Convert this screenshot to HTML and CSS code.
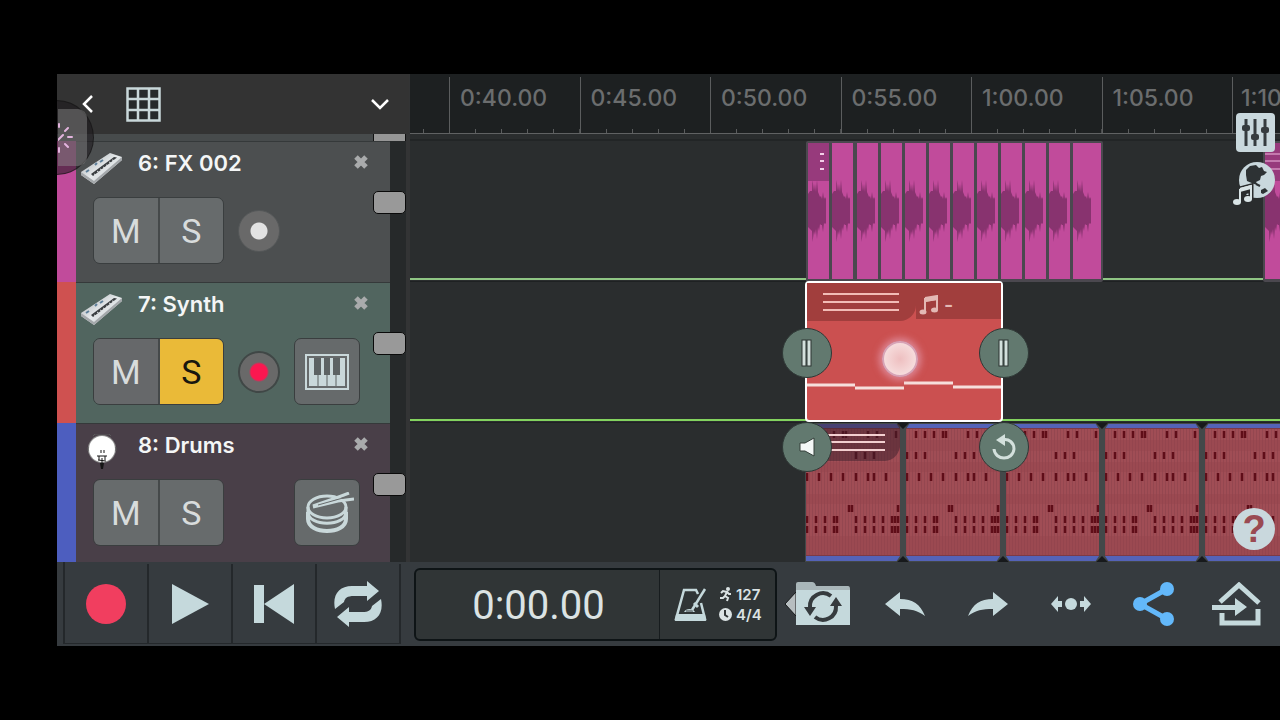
FILE: index.html
```html
<!DOCTYPE html>
<html lang="en">
<head>
    <meta charset="UTF-8">
    <meta name="viewport" content="width=device-width, initial-scale=1.0">
    <title>Song Editor</title>
    <link rel="stylesheet" href="styles.css">
</head>
<body>
    <!-- shared shapes -->
    <svg class="defs" width="0" height="0" aria-hidden="true">
        <defs>
            <linearGradient id="metal" x1="0" y1="0" x2="1" y2="1">
                <stop offset="0" stop-color="#9fa4a8"/>
                <stop offset="0.5" stop-color="#e6eaec"/>
                <stop offset="1" stop-color="#b9bdc0"/>
            </linearGradient>
            <symbol id="keys" viewBox="0 0 42 34">
                <path d="M0 20 29 1 41 5V8L13 32 0 23Z" fill="url(#metal)"/>
                <path d="M0 20 13 29 41 5V8L13 32 0 23Z" fill="#a4a8ab"/>
                <path d="M10 22 33 5 38 6 14 26Z" fill="#dfe3e5"/>
                <path d="M10 22 33 5 36 5.500 12 24Z" fill="#3b3f42"/>
                <path d="M13 22 17 24M16 19 20 22M19 17 23 19M22 15 26 17M25 13 29 14M28 10 32 12M31 8 35 9" stroke="#dfe3e5" stroke-width="1"/>
                <path d="M5 20 8 18M14 13 16 11M19 10 22 8" stroke="#5d7f9a" stroke-width="2"/>
            </symbol>
            <symbol id="wave" viewBox="0 0 19 64">
                <path d="M0 15 2 12 4 12 4.500 1 6 12 7 5 8 13 9 1 10 13 12 18 13 17 14 20 15 13 16 20 17 18 18 20V44L17 45 16 44 15 53 14 46 13 46 12 45 11 52 10 48 9 60 8 50 7 56 6 52 4.500 63 4 52 2 50 0 48Z" fill="#88336f"/>
            </symbol>
            <symbol id="fxpart" viewBox="0 0 21 136">
                <rect width="21" height="136" fill="#c14b9b"/>
                <use href="#wave" x="0" y="36" width="19" height="64"/>
            </symbol>
            <pattern id="bars" width="3" height="126" patternUnits="userSpaceOnUse">
                <rect width="3" height="126" fill="#a04d55"/>
                <rect width="1" height="126" fill="#944750"/>
            </pattern>
            <symbol id="drumpart" viewBox="0 0 94 137">
                <rect width="94" height="137" fill="#5463b8"/>
                <rect y="4" width="94" height="128" fill="#7d3a45"/>
                <rect y="5" width="94" height="126" fill="url(#bars)"/>
                <path d="M0 16h94v11H0zM0 38h94v10H0zM0 70h94v10H0zM0 112h94v19H0z" fill="#93434c" opacity="0.4"/>
                <g stroke="#5f0d18" stroke-width="2.500" fill="none">
                    <path d="M10 7v7M19 7v7M28 7v7M37 7v7M40 7v7M62 7v7M71 7v7M90 7v7"/>
                    <path d="M1 28v7M10 28v7M19 28v7M50 28v7M59 28v7M68 28v7"/>
                    <path d="M1 49v8M13 49v8M25 49v8M37 49v8M50 49v8M62 49v8M68 49v8M80 49v8"/>
                    <path d="M43 81v7M46 81v7M92 81v7"/>
                    <path id="hat" d="M1 92v7M10 92v7M19 92v7M28 92v7M31 92v7M50 92v7M59 92v7M68 92v7M77 92v7M86 92v7M89 92v7M92 92v7"/>
                    <use href="#hat" y="10"/>
                </g>
            </symbol>
            <symbol id="drumgap" viewBox="0 0 14 139">
                <path d="M4 0h6v139H4z" fill="#434849"/>
                <path d="M0 0h14l-4 6H4zM0 139h14l-4-6H4z" fill="#434849"/>
                <path d="M1 0h12l-6 6zM1 139h12l-6-6z" fill="#17191b"/>
            </symbol>
            <symbol id="notes" viewBox="0 0 20 20">
                <path d="M6 3 18 1V15M6 3V17M6 6 18 4" fill="none" stroke="currentColor" stroke-width="2"/>
                <path d="M6 3 18 1V5L6 7Z" fill="currentColor"/>
                <ellipse cx="4" cy="17" rx="3.500" ry="2.500" fill="currentColor"/>
                <ellipse cx="15.500" cy="15" rx="3.500" ry="2.500" fill="currentColor"/>
            </symbol>
            <symbol id="cross" viewBox="0 0 16 16">
                <path d="M3 3 13 13M13 3 3 13" stroke="#a9abac" stroke-width="5"/>
            </symbol>
        </defs>
    </svg>

    <div class="app">
        <main class="editor">
            <section class="track-panel">
                <header class="panel-header">
                    <button class="icon-button back" aria-label="Back">
                        <svg width="12" height="18" viewBox="0 0 12 18"><path d="M11 1 3 9 11 17" fill="none" stroke="#fff" stroke-width="2.500"/></svg>
                    </button>
                    <button class="icon-button grid-button" aria-label="Grid">
                        <svg width="35" height="35" viewBox="0 0 35 35">
                            <rect x="1.500" y="1.500" width="32" height="32" fill="#262a2b" stroke="#c9d8da" stroke-width="2.500"/>
                            <path d="M12 1V34M23 1V34M1 12H34M1 23H34" stroke="#c9d8da" stroke-width="2.500"/>
                        </svg>
                    </button>
                    <button class="icon-button collapse" aria-label="Collapse">
                        <svg width="18" height="11" viewBox="0 0 18 11"><path d="M1 1 9 9 17 1" fill="none" stroke="#fff" stroke-width="2.500"/></svg>
                    </button>
                </header>
                <div class="track-edge"><span class="edge-knob"></span></div>

                <article class="track track-fx">
                    <div class="track-body">
                        <div class="track-title">
                            <svg class="instrument" width="42" height="34"><use href="#keys"/></svg>
                            <h2>6: FX 002</h2>
                            <button class="icon-button close" aria-label="Remove track 6"><svg width="16" height="16"><use href="#cross"/></svg></button>
                        </div>
                        <div class="controls">
                            <div class="mute-solo">
                                <button>M</button>
                                <button>S</button>
                            </div>
                            <button class="arm" aria-label="Arm track 6"></button>
                        </div>
                    </div>
                    <input class="fader" type="range" min="0" max="100" value="58" aria-label="Volume 6">
                </article>

                <article class="track track-synth">
                    <div class="track-body">
                        <div class="track-title">
                            <svg class="instrument" width="42" height="34"><use href="#keys"/></svg>
                            <h2>7: Synth</h2>
                            <button class="icon-button close" aria-label="Remove track 7"><svg width="16" height="16"><use href="#cross"/></svg></button>
                        </div>
                        <div class="controls">
                            <div class="mute-solo">
                                <button>M</button>
                                <button class="on">S</button>
                            </div>
                            <button class="arm armed" aria-label="Arm track 7"></button>
                            <button class="play-pad" aria-label="Piano">
                                <svg width="44" height="36" viewBox="0 0 44 36">
                                    <rect x="1" y="1" width="42" height="34" fill="none" stroke="#c9d8da" stroke-width="2"/>
                                    <rect x="4" y="4" width="36" height="28" fill="#c9d8da"/>
                                    <path d="M13 20V32M22 20V32M31 20V32" stroke="#5c6263" stroke-width="1"/>
                                    <path d="M9 4h7v17H9zM19 4h6v17h-6zM28 4h7v17h-7z" fill="#5c6263"/>
                                </svg>
                            </button>
                        </div>
                    </div>
                    <input class="fader" type="range" min="0" max="100" value="58" aria-label="Volume 7">
                </article>

                <article class="track track-drums">
                    <div class="track-body">
                        <div class="track-title">
                            <svg class="instrument" width="42" height="38" viewBox="0 2 42 38">
                                <circle cx="21" cy="17" r="14" fill="#8c8c8c"/>
                                <circle cx="21" cy="17" r="13" fill="#fff"/>
                                <path d="M12 4 14 2H28L30 4M7 15v4M35 15v4" fill="none" stroke="#5b5b5b" stroke-width="1"/>
                                <path d="M20 18v3M23 18v3M16 24h10M18 24v4M24 24v4M17 28 25 29M21 26v9" stroke="#151515" stroke-width="1"/>
                                <path d="M19 31h4l-1 6h-2z" fill="#151515"/>
                            </svg>
                            <h2>8: Drums</h2>
                            <button class="icon-button close" aria-label="Remove track 8"><svg width="16" height="16"><use href="#cross"/></svg></button>
                        </div>
                        <div class="controls">
                            <div class="mute-solo">
                                <button>M</button>
                                <button>S</button>
                            </div>
                            <button class="play-pad" aria-label="Drum pads">
                                <svg width="54" height="42" viewBox="-6 0 54 42" fill="none" stroke="#c9d8da">
                                    <ellipse cx="21" cy="15" rx="19" ry="11" stroke-width="3"/>
                                    <path d="M2 15V20C2 35 40 35 40 20V15" stroke-width="3"/>
                                    <path d="M2 20V27C2 43 40 43 40 27V20" stroke-width="4"/>
                                    <path d="M7 14 30 6 43 1" stroke-width="3"/>
                                    <path d="M7 15 32 9 48 7" stroke-width="3"/>
                                    <path d="M12 13 44 4" stroke="#666a6b" stroke-width="1"/>
                                </svg>
                            </button>
                        </div>
                    </div>
                    <input class="fader" type="range" min="0" max="100" value="58" aria-label="Volume 8">
                </article>

                <div class="assist">
                    <svg class="assist-pad" width="29" height="57" viewBox="0 0 29 57">
                        <path d="M0 31 5 26M7 22 10 19M10 28H14M7 35 10 38M1 18V15M1 39V43" stroke="#e3b4de" stroke-width="2" stroke-linecap="round"/>
                    </svg>
                </div>
            </section>

            <section class="timeline">
                <div class="ruler">
                    <span class="lead"></span>
                    <span>0:40.00</span>
                    <span>0:45.00</span>
                    <span>0:50.00</span>
                    <span>0:55.00</span>
                    <span>1:00.00</span>
                    <span>1:05.00</span>
                    <span>1:10</span>
                </div>
                <div class="ruler-edge"></div>

                <div class="lane lane-fx">
                    <svg class="clip clip-fx" width="297" height="141" viewBox="0 0 297 141">
                        <rect width="297" height="141" rx="2" fill="#4b484f"/>
                        <rect x="267" y="2" width="28" height="136" fill="#c14b9b"/>
                        <use href="#fxpart" x="2" y="2" width="21" height="136"/>
                        <use href="#fxpart" x="26" y="2" width="21" height="136"/>
                        <use href="#fxpart" x="51" y="2" width="21" height="136"/>
                        <use href="#fxpart" x="75" y="2" width="21" height="136"/>
                        <use href="#fxpart" x="99" y="2" width="21" height="136"/>
                        <use href="#fxpart" x="123" y="2" width="21" height="136"/>
                        <use href="#fxpart" x="147" y="2" width="21" height="136"/>
                        <use href="#fxpart" x="171" y="2" width="21" height="136"/>
                        <use href="#fxpart" x="195" y="2" width="21" height="136"/>
                        <use href="#fxpart" x="219" y="2" width="21" height="136"/>
                        <use href="#fxpart" x="243" y="2" width="21" height="136"/>
                        <use href="#fxpart" x="267" y="2" width="21" height="136"/>
                        <rect x="2" y="2" width="21" height="38" fill="#973a7c"/>
                        <path d="M14 13h4M14 20h4M14 28h4" stroke="#f3cfe8" stroke-width="2"/>
                    </svg>
                    <svg class="clip clip-fx-next" width="60" height="141" viewBox="0 0 60 141">
                        <rect width="60" height="141" rx="2" fill="#4b484f"/>
                        <rect x="2" y="2" width="58" height="136" fill="#c14b9b"/>
                        <use href="#wave" x="2" y="38" width="19" height="64"/>
                        <rect x="2" y="2" width="58" height="38" fill="#973a7c"/>
                        <path d="M2 13h58M2 20h58M2 28h58" stroke="#f0b8df" stroke-width="1"/>
                    </svg>
                </div>

                <div class="lane lane-synth">
                    <div class="clip clip-synth">
                        <div class="clip-head">
                            <span class="clip-name">
                                <svg width="76" height="18" viewBox="0 0 76 18"><path d="M0 1H76M0 9H76M0 17H76" stroke="#f2bcb6" stroke-width="2"/></svg>
                            </span>
                            <span class="clip-notes"><svg width="20" height="20"><use href="#notes"/></svg>-</span>
                        </div>
                        <svg class="melody" viewBox="0 0 194 10" preserveAspectRatio="none">
                            <path d="M0 4H48M48 7H97M97 2H146M146 6H194" stroke="#f6dfdc" stroke-width="3"/>
                        </svg>
                        <span class="touch"></span>
                        <button class="handle top left" aria-label="Trim start">
                            <svg width="14" height="28" viewBox="0 0 14 28" fill="#d3e0dc" stroke="#2d3432"><rect x="2" y="1" width="4" height="26"/><rect x="7" y="1" width="4" height="26"/></svg>
                        </button>
                        <button class="handle top right" aria-label="Trim end">
                            <svg width="14" height="28" viewBox="0 0 14 28" fill="#d3e0dc" stroke="#2d3432"><rect x="2" y="1" width="4" height="26"/><rect x="7" y="1" width="4" height="26"/></svg>
                        </button>
                        <button class="handle bottom left" aria-label="Mute clip">
                            <svg width="18" height="20" viewBox="0 0 18 20"><path d="M2 6H7L16 1V19L7 14H2Z" fill="#f4f8f7" stroke="#35403b"/></svg>
                        </button>
                        <button class="handle bottom right" aria-label="Loop clip">
                            <svg width="26" height="28" viewBox="0 0 26 28">
                                <path d="M11 7C18 5 23 10 23 16 22 28 4 28 3 16" fill="none" stroke="#d3e0dc" stroke-width="3"/>
                                <path d="M5 7 14 1 14 13Z" fill="#d3e0dc"/>
                            </svg>
                        </button>
                    </div>
                </div>

                <div class="lane lane-drums">
                    <svg class="clip clip-drums" width="500" height="139" viewBox="0 0 500 139">
                        <rect width="500" height="139" fill="#434849"/>
                        <use href="#drumpart" x="1" y="1" width="94" height="137"/>
                        <use href="#drumpart" x="101" y="1" width="94" height="137"/>
                        <use href="#drumpart" x="201" y="1" width="94" height="137"/>
                        <use href="#drumpart" x="300" y="1" width="94" height="137"/>
                        <use href="#drumpart" x="400" y="1" width="94" height="137"/>
                        <use href="#drumgap" x="91" y="0" width="14" height="139"/>
                        <use href="#drumgap" x="191" y="0" width="14" height="139"/>
                        <use href="#drumgap" x="290" y="0" width="14" height="139"/>
                        <use href="#drumgap" x="390" y="0" width="14" height="139"/>
                        <path d="M1 1H95V24Q92 37 80 38H1Z" fill="#3b1f2c" opacity="0.5"/>
                        <path d="M20 12H80M20 19H80M20 27H80" stroke="#f3cfd0" stroke-width="2"/>
                    </svg>
                </div>

                <nav class="side-tools">
                    <button class="icon-button" aria-label="Mixer">
                        <svg width="39" height="39" viewBox="0 0 39 39">
                            <rect width="39" height="39" rx="4" fill="#c9d8dd"/>
                            <path d="M10 6V33M19 6V33M29 6V33" stroke="#353b3e" stroke-width="3"/>
                            <rect x="6" y="12" width="8" height="6" rx="2" fill="#353b3e"/>
                            <rect x="15" y="21" width="8" height="6" rx="2" fill="#353b3e"/>
                            <rect x="25" y="14" width="8" height="6" rx="2" fill="#353b3e"/>
                        </svg>
                    </button>
                    <button class="icon-button" aria-label="Sound library">
                        <svg width="42" height="46" viewBox="0 0 42 46">
                            <circle cx="24" cy="20" r="18" fill="#c9d8dd"/>
                            <path d="M13 10 17 6 23 5 26 8 29 7 31 11 34 12 31 15 28 16 27 20 23 22 25 25 21 24 14 21 13 15Z" fill="#2d3234"/>
                            <path d="M28 30 32 28 35 31 30 34 28 33Z" fill="#2d3234"/>
                            <path d="M23 24 27 26" fill="none" stroke="#2d3234" stroke-width="2"/>
                            <path d="M7 29 18 26V39M7 29V42M7 33 18 30" fill="none" stroke="#2a2d2e" stroke-width="5"/>
                            <ellipse cx="15" cy="39" rx="5" ry="4" fill="#2a2d2e"/>
                            <path d="M7 29 18 26V39M7 29V42" fill="none" stroke="#d9e4e6" stroke-width="2"/>
                            <path d="M7 28 18 25V29L7 32Z" fill="#d9e4e6"/>
                            <ellipse cx="4" cy="42" rx="4" ry="3" fill="#d9e4e6"/>
                            <ellipse cx="15" cy="39" rx="4" ry="3" fill="#d9e4e6"/>
                        </svg>
                    </button>
                </nav>
                <button class="help">?</button>
            </section>
        </main>

        <footer class="transport">
            <div class="playback">
                <button aria-label="Record"><svg width="40" height="40" viewBox="0 0 40 40"><circle cx="20" cy="20" r="20" fill="#f13e5f"/></svg></button>
                <button aria-label="Play"><svg width="38" height="40" viewBox="0 0 38 40"><path d="M1 0 38 20 1 40Z" fill="#c5d9dc"/></svg></button>
                <button aria-label="Rewind"><svg width="40" height="40" viewBox="0 0 40 40"><path d="M0 1h10v38H0zM40 0V40L10 20Z" fill="#c5d9dc"/></svg></button>
                <button aria-label="Loop">
                    <svg width="48" height="46" viewBox="0 0 48 46">
                        <path id="loop-arrow" d="M1 28C-2 14 5 5 18 5H33V0L45 10 33 20V15H20C13 15 11 17 10 21Z" fill="#c5d9dc"/>
                        <use href="#loop-arrow" transform="rotate(180 24 23)"/>
                    </svg>
                </button>
            </div>

            <div class="display">
                <div class="time">0:00.00</div>
                <div class="tempo">
                    <svg class="metronome" width="33" height="33" viewBox="0 0 33 33">
                        <path d="M27 15 31 31H2L10 2H22L24 6" fill="none" stroke="#c5d9dc" stroke-width="2.500"/>
                        <path d="M2 26H31L32 33H1Z" fill="#c5d9dc"/>
                        <path d="M10 24A6 5 0 0 1 21 24Z" fill="#c5d9dc"/>
                        <path d="M12 23H19" stroke="#303536" stroke-width="1"/>
                        <path d="M18 22 31 1" stroke="#c5d9dc" stroke-width="2.500"/>
                        <path d="M20 15 24 19" stroke="#c5d9dc" stroke-width="3"/>
                    </svg>
                    <div class="tempo-values">
                        <span>
                            <svg width="13" height="15" viewBox="0 0 13 15"><circle cx="9" cy="2" r="2" fill="#dbe3e4"/><path d="M2 6 4 4 8 5 6 9 9 11 8 14M6 9 4 11 1 11M8 5 10 7 12 7" fill="none" stroke="#dbe3e4" stroke-width="2"/></svg>
                            127
                        </span>
                        <span>
                            <svg width="13" height="13" viewBox="0 0 13 13"><circle cx="6.500" cy="6.500" r="6.500" fill="#dbe3e4"/><path d="M6 2V7L9 9" fill="none" stroke="#303536" stroke-width="2"/></svg>
                            4/4
                        </span>
                    </div>
                </div>
            </div>

            <div class="actions">
                <button class="browse" aria-label="Browse loops">
                    <svg width="66" height="44" viewBox="0 0 66 44">
                        <path d="M11 10V34L0 22Z" fill="#b7bec0" stroke="#16191b" stroke-width="1"/>
                        <path d="M11 8V2Q11 0 13 0H27Q30 0 31 4H63Q65 4 65 7V9H11Z" fill="#a9b6b9"/>
                        <path d="M11 8H65V43H11Z" fill="#c5d9dc"/>
                        <g fill="none" stroke="#363b3e" stroke-width="4">
                            <path d="M25 25A13 13 0 0 1 46 14"/>
                            <path d="M51 24A13 13 0 0 1 30 35"/>
                        </g>
                        <path d="M19 25H31L25 34ZM45 24H57L51 15Z" fill="#363b3e"/>
                    </svg>
                </button>
                <button aria-label="Undo">
                    <svg width="40" height="26" viewBox="0 0 40 26"><path d="M0 13 15 1V8C28 8 35 13 40 25 32 19 26 18 15 18V25Z" fill="#c5d9dc"/></svg>
                </button>
                <button aria-label="Redo">
                    <svg width="40" height="26" viewBox="0 0 40 26"><path d="M40 13 25 1V8C12 8 5 13 0 25 8 19 14 18 25 18V25Z" fill="#c5d9dc"/></svg>
                </button>
                <button aria-label="Fit width">
                    <svg width="40" height="16" viewBox="0 0 40 16" fill="#c5d9dc"><circle cx="20" cy="8" r="6"/><path d="M0 8 7 0V5H11V11H7V16ZM40 8 33 0V5H29V11H33V16Z"/></svg>
                </button>
                <button aria-label="Share">
                    <svg width="42" height="44" viewBox="0 0 42 44" fill="#63b8fa"><path d="M34 7 7 22 34 37" fill="none" stroke="#63b8fa" stroke-width="5"/><circle cx="34" cy="7" r="7"/><circle cx="7" cy="22" r="7"/><circle cx="34" cy="37" r="7"/></svg>
                </button>
                <button aria-label="Exit">
                    <svg width="50" height="44" viewBox="0 0 50 44">
                        <path d="M8 20 27 3 47 21" fill="none" stroke="#c5d9dc" stroke-width="5"/>
                        <path d="M10 31V41H46V27" fill="none" stroke="#c5d9dc" stroke-width="5"/>
                        <path d="M0 23H23V16L35 25 23 34V28H0Z" fill="#c5d9dc"/>
                    </svg>
                </button>
            </div>
        </footer>
    </div>
</body>
</html>
```

FILE: styles.css
```css
* {
    box-sizing: border-box;
}
body {
    font-family: Inter, "Noto Sans", sans-serif;
    background-color: #000;
    margin: 0;
    overflow: hidden;
}
button {
    font-family: Roboto, sans-serif;
    color: #d8dcdc;
    border: 0;
    padding: 0;
    cursor: pointer;
}
svg {
    display: block;
}
.defs {
    position: absolute;
}
.app {
    margin: 74px 0 74px 57px;
    overflow: hidden;
}
.icon-button {
    background: none;
}
.editor {
    display: flex;
    height: 488px;
    overflow: hidden;
}

/* track list */
.track-panel {
    position: relative;
    width: 353px;
    flex: none;
    overflow: hidden;
    background-color: #333435;
    border-right: 1px solid #333435;
}
.panel-header {
    display: flex;
    align-items: center;
    height: 60px;
    padding: 0 20px 0 24px;
    background-color: #333333;
}
.grid-button {
    margin-left: 33px;
}
.collapse {
    margin-left: auto;
}
.track-edge {
    display: flex;
    justify-content: flex-end;
    height: 7px;
    margin-right: 3px;
    background-color: #474b4c;
}
.edge-knob {
    width: 33px;
    background-color: #969696;
    border: 1px solid #111;
    border-width: 0 1px;
}
.track {
    position: relative;
    height: 141px;
    margin-right: 3px;
    padding-right: 16px;
    background-color: #26292a;
}
.track-body {
    height: 100%;
    padding: 9px 21px 0 5px;
    border-left: 19px solid;
    border-left-color: inherit;
    box-shadow: inset 0 1px 0 #35393a;
}
.track-fx {
    border-color: #c14b9b;
}
.track-fx .track-body {
    background-color: #4c4f50;
}
.track-synth {
    border-color: #cf5150;
}
.track-synth .track-body {
    background-color: #51655f;
}
.track-drums {
    border-color: #4d5ebf;
}
.track-drums .track-body {
    background-color: #493f48;
}
.track-title {
    display: flex;
    align-items: flex-start;
    height: 47px;
}
.track-title .instrument {
    margin-top: 2px;
}
.track-title h2 {
    flex: 1;
    margin: 0 0 0 15px;
    font-size: 22px;
    font-weight: 600;
    line-height: 26px;
    color: #f4f6f6;
}
.close {
    margin-top: 4px;
}
.controls {
    display: grid;
    grid-template-columns: 131px 42px 66px;
    column-gap: 14px;
    align-items: center;
    padding-left: 12px;
}
.mute-solo {
    display: flex;
    border: 1px solid #3a3e3f;
    border-radius: 7px;
    overflow: hidden;
}
.mute-solo button {
    flex: 1;
    height: 65px;
    font-size: 34px;
    line-height: 66px;
    background-color: #676b6c;
}
.mute-solo button + button {
    border-left: 2px solid #45494a;
}
.track-synth .mute-solo button {
    background-color: #66686a;
}
.track-synth .mute-solo .on {
    background-color: #eaba38;
    color: #18160f;
}
.arm {
    width: 42px;
    height: 42px;
    border: 1px solid #555859;
    border-radius: 50%;
    background: radial-gradient(circle, #e2e2e2 0 8px, #696969 9px);
}
.arm.armed {
    border: 2px solid #404746;
    background: radial-gradient(circle, #fb1750 0 8px, #696969 10px);
}
.play-pad {
    display: flex;
    grid-column: 3;
    align-items: center;
    justify-content: center;
    height: 67px;
    border: 1px solid #3a3e3f;
    border-radius: 7px;
    background-color: #666a6b;
}
.fader {
    position: absolute;
    top: 0;
    right: 0;
    width: 33px;
    height: 100%;
    margin: 0;
    appearance: none;
    background: none;
    writing-mode: vertical-lr;
    direction: rtl;
}
.fader::-webkit-slider-thumb {
    appearance: none;
    width: 33px;
    height: 23px;
    background-color: #999;
    border: 1px solid #0a0a0a;
    border-radius: 5px;
}

/* floating touch shortcut, half off the left edge */
.assist {
    position: absolute;
    top: 26px;
    left: -38px;
    display: flex;
    align-items: center;
    width: 75px;
    height: 75px;
    padding-left: 38px;
    border: 1px solid rgba(20, 20, 20, 0.6);
    border-radius: 50%;
    background-color: rgba(25, 22, 26, 0.55);
}
.assist-pad {
    border-radius: 0 9px 9px 0;
    background-color: rgba(150, 150, 150, 0.42);
}

/* timeline */
.timeline {
    position: relative;
    flex: 1;
    min-width: 0;
    overflow: hidden;
    background-color: #2a2d2e;
}
.ruler {
    display: grid;
    grid-template-columns: 39px repeat(6, 1fr) 48px;
    height: 60px;
    padding-top: 3px;
    overflow: hidden;
    background-color: #1d2021;
    border-bottom: 1px solid #606263;
    color: #6b6d6e;
    font-size: 23px;
    font-weight: 500;
    line-height: 42px;
}
.ruler span {
    min-width: 0;
    padding-left: 10px;
    border-left: 1px solid #5b5d5e;
    background: repeating-linear-gradient(to right, transparent 0 25px, #5b5d5e 25px 26px) bottom / 100% 4px no-repeat;
}
.ruler span:last-child {
    padding-left: 8px;
}
.ruler .lead {
    border-left: 0;
    background-position: -12px 100%;
    background-size: 51px 4px;
}
.ruler-edge {
    height: 7px;
    border-bottom: 2px solid #222526;
}
.lane {
    position: relative;
    height: 141px;
    border-bottom: 1px solid #1e2122;
}
.lane-fx {
    background: linear-gradient(#8fc584, #8fc584) 0 137px / 100% 2px no-repeat;
}
.lane-synth {
    background: linear-gradient(#83d35f, #83d35f) 0 137px / 100% 2px no-repeat;
}
.clip {
    position: absolute;
    top: 0;
    left: 395px;
}
.clip-fx {
    left: 396px;
}
.clip-fx-next {
    left: 853px;
}
.clip-synth {
    z-index: 2;
    top: -1px;
    width: 198px;
    height: 141px;
    border: 2px solid #fff;
    border-radius: 4px;
    background-color: #cb5050;
}
.clip-head {
    display: flex;
    color: #e3b9b4;
}
.clip-name {
    width: 109px;
    height: 38px;
    padding: 10px 16px;
    background-color: #a13e3d;
    border-bottom-right-radius: 16px;
}
.clip-notes {
    display: flex;
    flex: 1;
    align-items: center;
    gap: 5px;
    height: 36px;
    padding: 8px 0 0 3px;
    background-color: #a13e3d;
    font-size: 20px;
    font-weight: 600;
    line-height: 20px;
}
.melody {
    width: 100%;
    height: 10px;
    margin-top: 60px;
}
.touch {
    position: absolute;
    top: 58px;
    left: 75px;
    width: 36px;
    height: 36px;
    border: 2px solid #d7a3b6;
    border-radius: 50%;
    background: radial-gradient(circle, #eebfc0, #f6dcdc 70%);
    box-shadow: 0 0 7px 3px rgba(230, 160, 180, 0.7);
}
.handle {
    position: absolute;
    display: flex;
    align-items: center;
    justify-content: center;
    width: 50px;
    height: 50px;
    border: 1px solid #2f3836;
    border-radius: 50%;
    background-color: #62796f;
}
.handle.top {
    top: 45px;
}
.handle.bottom {
    bottom: -52px;
}
.handle.left {
    left: -25px;
}
.handle.right {
    right: -28px;
}
.side-tools {
    position: absolute;
    top: 39px;
    right: 5px;
    display: flex;
    flex-direction: column;
    align-items: flex-end;
    gap: 8px;
}
.help {
    position: absolute;
    right: 5px;
    bottom: 12px;
    width: 42px;
    height: 42px;
    border-radius: 50%;
    background-color: #c9d8dd;
    color: #9a4a52;
    font-family: "Liberation Sans", sans-serif;
    font-size: 38px;
    font-weight: bold;
    line-height: 42px;
}

/* bottom bar */
.transport {
    display: flex;
    height: 84px;
    background-color: #363b3f;
}
.transport button {
    display: flex;
    align-items: center;
    justify-content: center;
    background: none;
}
.playback {
    display: grid;
    grid-template-columns: repeat(4, 84px);
    margin: 0 13px 2px 6px;
    padding-top: 2px;
    border-left: 2px solid #24282b;
    border-bottom: 1px solid #24282b;
}
.playback button {
    border-right: 2px solid #24282b;
}
.display {
    display: flex;
    width: 363px;
    margin: 6px 0 5px;
    border: 2px solid #0e1416;
    border-radius: 6px;
    background-color: #303536;
    color: #dbe3e4;
}
.time {
    flex: 1;
    padding-left: 2px;
    border-right: 1px solid #171c1e;
    font-family: Roboto, sans-serif;
    font-size: 40px;
    line-height: 72px;
    text-align: center;
}
.tempo {
    display: flex;
    align-items: center;
    gap: 12px;
    width: 115px;
    padding-left: 14px;
}
.tempo-values {
    font-size: 15px;
    font-weight: 600;
    line-height: 20px;
}
.tempo-values span {
    display: flex;
    align-items: center;
    gap: 4px;
}
.actions {
    display: grid;
    flex: 1;
    grid-template-columns: repeat(6, 1fr);
    padding: 0 2px 0 4px;
}
.actions .browse {
    justify-content: flex-start;
    padding-left: 4px;
}
```
